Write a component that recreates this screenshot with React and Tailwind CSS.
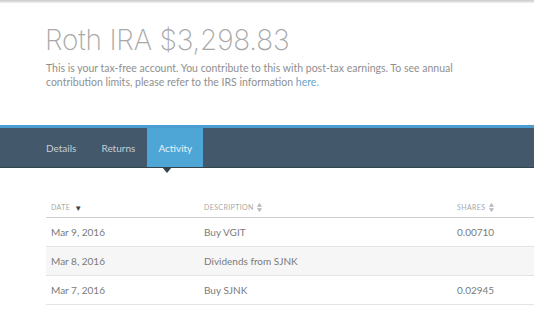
import React from 'react';

const rows = [
  { date: 'Mar 9, 2016', desc: 'Buy VGIT', shares: '0.00710' },
  { date: 'Mar 8, 2016', desc: 'Dividends from SJNK', shares: '' },
  { date: 'Mar 7, 2016', desc: 'Buy SJNK', shares: '0.02945' },
];

const SortBoth = () => (
  <svg width="5" height="9" viewBox="0 0 5 9" className="ml-[3px] inline-block">
    <path d="M2.5 0 L5 3.8 L0 3.8 Z M2.5 9 L5 5.2 L0 5.2 Z" fill="#b5b5b5" />
  </svg>
);

const App = () => {
  return (
    <div className="w-[534px] h-[310px] overflow-hidden bg-white font-['Lato',sans-serif]">
      <div className="h-[3px] bg-gradient-to-b from-[#c9c9c9] to-[#f2f2f2]" />

      <div className="pl-[45px] pt-[18px] h-[122px]">
        <h1 className="font-['Inter',sans-serif] text-[28px] leading-[38px] font-extralight text-[#a8a8a8] tracking-[-0.2px]">Roth IRA $3,298.83</h1>
        <p className="mt-[2px] ml-[1px] w-[420px] text-[10.5px] leading-[14px] text-[#8f8f8f]">
          This is your tax-free account. You contribute to this with post-tax earnings. To see annual contribution limits, please refer to the IRS information <span className="text-[#6aa3c8]">here.</span>
        </p>
      </div>

      <div className="border-t-[3px] border-[#4c9ed0] bg-[#43586a] h-[43px] border-b border-b-[#33444f]">
        <div className="flex h-full pl-[46px] text-[10px] text-[#c4ced6]">
          <div className="flex items-center pt-[2px]">Details</div>
          <div className="ml-[25px] flex items-center pt-[2px]">Returns</div>
          <div className="relative ml-[12px] w-[56px] bg-[#4ea6d6] flex items-center justify-center pt-[2px] text-[#e6f2f9]">
            Activity
            <div className="absolute left-[15px] -bottom-[6px] w-0 h-0 border-l-[5px] border-r-[5px] border-t-[6px] border-l-transparent border-r-transparent border-t-[#33444f]" />
          </div>
        </div>
      </div>

      <div className="pl-[46px] pt-[30px]">
        <div className="flex h-[20px] items-center border-b border-[#cfcfcf] text-[7px] tracking-[0.4px] uppercase text-[#a8a8a8]">
          <div className="w-[158px] pl-[5px] flex items-center">Date <span className="ml-[4px] text-[#444] text-[8px]">▼</span></div>
          <div className="w-[253px] flex items-center">Description <SortBoth /></div>
          <div className="flex items-center">Shares <SortBoth /></div>
        </div>
        {rows.map((r, i) => (
          <div key={i} className={`flex h-[29px] items-center border-b border-[#e4e4e4] text-[10px] text-[#7a7a7a] ${i === 1 ? 'bg-[#f6f6f6]' : ''}`}>
            <div className="w-[158px] pl-[5px]">{r.date}</div>
            <div className="w-[253px]">{r.desc}</div>
            <div>{r.shares}</div>
          </div>
        ))}
      </div>
    </div>
  );
};

export default App;
